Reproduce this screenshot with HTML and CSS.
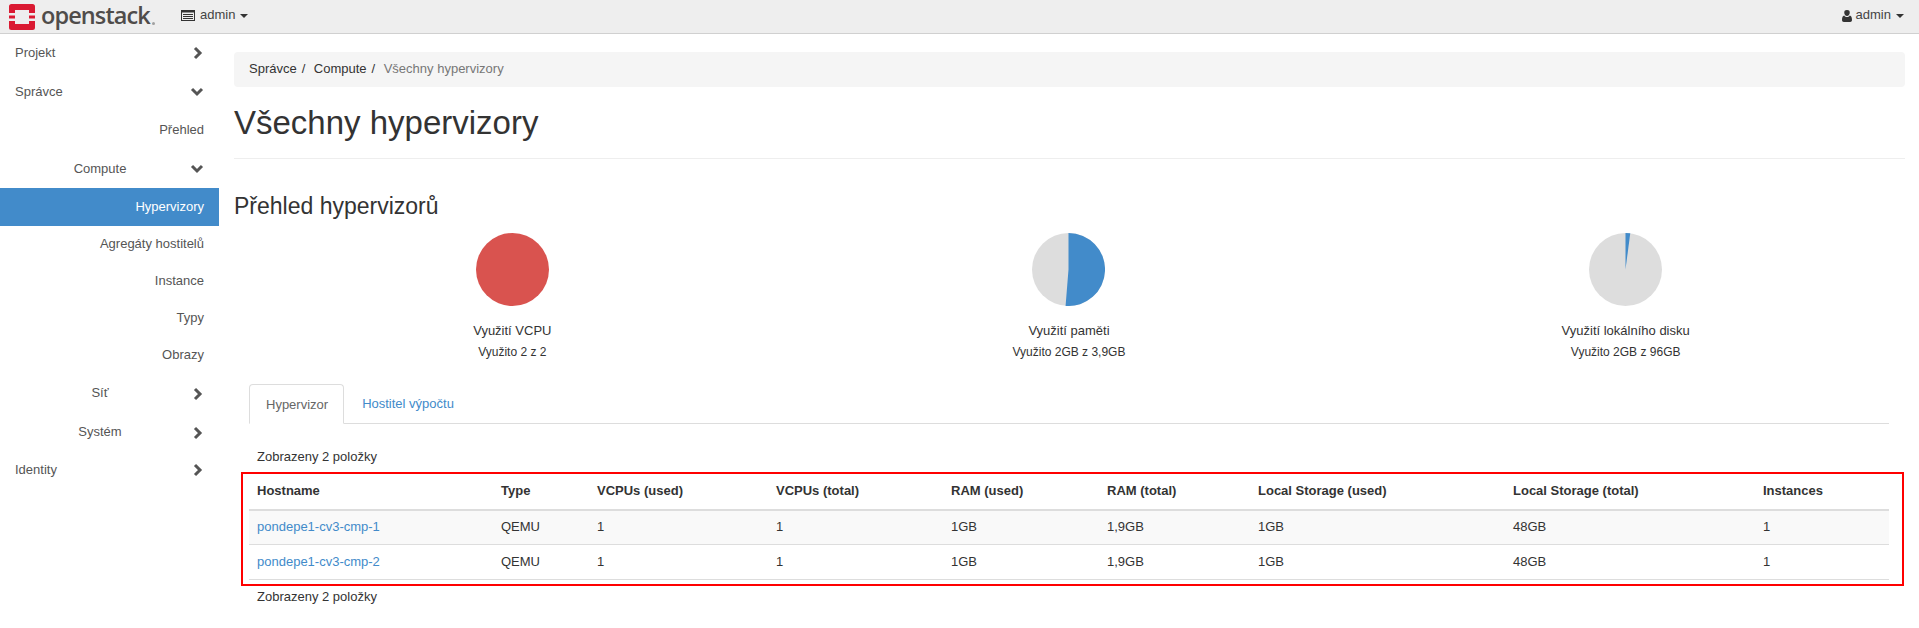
FILE: index.html
```html
<!DOCTYPE html>
<html lang="cs">
<head>
    <meta charset="UTF-8">
    <title>Všechny hypervizory</title>
    <link rel="stylesheet" href="styles.css">
</head>
<body>
    <!-- Top bar -->
    <header class="topbar">
        <div class="brand">
            <svg class="brand-mark" viewBox="0 0 26 26" width="26" height="26">
                <path fill="#da1a32" d="M2.5 0h21A2.5 2.5 0 0 1 26 2.500V9h-6V6H6v3H0V2.500A2.500 2.500 0 0 1 2.500 0zM0 11.500h6v3H0zM20 11.500h6v3h-6zM0 17h6v3h14v-3h6v6.500a2.500 2.500 0 0 1-2.500 2.500h-21A2.500 2.500 0 0 1 0 23.500z"/>
            </svg>
            <span class="brand-name">openstack</span><span class="brand-dot"></span>
        </div>
        <div class="project-menu">
            <svg class="icon-server" viewBox="0 0 14 11" width="14" height="11">
                <path fill="#333" fill-rule="evenodd" d="M0 0h14v11H0zM1 2.500v7.500h12V2.500zM2 4h10v1H2zM2 6h10v1H2zM2 8h10v1H2z"/>
            </svg>
            <span>admin</span><span class="caret"></span>
        </div>
        <div class="user-menu">
            <svg class="icon-user" viewBox="0 0 10 12" width="10" height="12">
                <path fill="#333" d="M5 0a2.700 2.700 0 0 1 2.700 3c0 1.500-1.100 3.100-2.700 3.100S2.300 4.500 2.300 3A2.700 2.700 0 0 1 5 0zM2.200 5.500C3 6.600 3.900 7 5 7s2-.4 2.800-1.500C9.200 5.700 10 7.200 10 10c0 1.200-.8 2-1.800 2H1.800C.8 12 0 11.200 0 10c0-2.800.8-4.300 2.200-4.500z"/>
            </svg>
            <span>admin</span><span class="caret"></span>
        </div>
    </header>

    <div class="layout">
        <!-- Sidebar -->
        <nav class="sidebar">
            <a class="nav-row nav-top">Projekt<svg class="chev" viewBox="0 0 12 14" width="12" height="14"><path d="M3 2l5 5-5 5" /></svg></a>
            <a class="nav-row nav-top">Správce<svg class="chev" viewBox="0 0 14 12" width="14" height="12"><path d="M2 3l5 5 5-5" /></svg></a>
            <a class="nav-row nav-sub">Přehled</a>
            <a class="nav-row nav-group">Compute<svg class="chev" viewBox="0 0 14 12" width="14" height="12"><path d="M2 3l5 5 5-5" /></svg></a>
            <a class="nav-leaf active">Hypervizory</a>
            <a class="nav-leaf">Agregáty hostitelů</a>
            <a class="nav-leaf">Instance</a>
            <a class="nav-leaf">Typy</a>
            <a class="nav-leaf">Obrazy</a>
            <a class="nav-row nav-group">Síť<svg class="chev" viewBox="0 0 12 14" width="12" height="14"><path d="M3 2l5 5-5 5" /></svg></a>
            <a class="nav-row nav-group">Systém<svg class="chev" viewBox="0 0 12 14" width="12" height="14"><path d="M3 2l5 5-5 5" /></svg></a>
            <a class="nav-row nav-top">Identity<svg class="chev" viewBox="0 0 12 14" width="12" height="14"><path d="M3 2l5 5-5 5" /></svg></a>
        </nav>

        <!-- Main content -->
        <main class="content">
            <ol class="breadcrumb">
                <li>Správce</li>
                <li>Compute</li>
                <li class="current">Všechny hypervizory</li>
            </ol>

            <h1 class="page-title">Všechny hypervizory</h1>

            <h3 class="section-title">Přehled hypervizorů</h3>

            <div class="charts">
                <div class="chart">
                    <svg class="pie" viewBox="0 0 73 73" width="73" height="73">
                        <circle cx="36.500" cy="36.500" r="36.500" fill="#d9534f"/>
                    </svg>
                    <div class="chart-title">Využití VCPU</div>
                    <div class="chart-note">Využito 2 z 2</div>
                </div>
                <div class="chart">
                    <svg class="pie" viewBox="0 0 73 73" width="73" height="73">
                        <circle cx="36.500" cy="36.500" r="36.500" fill="#dddddd"/>
                        <path fill="#428bca" d="M36.500 36.500V0A36.500 36.500 0 1 1 33.570 72.880z"/>
                    </svg>
                    <div class="chart-title">Využití paměti</div>
                    <div class="chart-note">Využito 2GB z 3,9GB</div>
                </div>
                <div class="chart">
                    <svg class="pie" viewBox="0 0 73 73" width="73" height="73">
                        <circle cx="36.500" cy="36.500" r="36.500" fill="#dddddd"/>
                        <path fill="#428bca" d="M36.500 36.500V0A36.500 36.500 0 0 1 41.260 .310z"/>
                    </svg>
                    <div class="chart-title">Využití lokálního disku</div>
                    <div class="chart-note">Využito 2GB z 96GB</div>
                </div>
            </div>

            <div class="tab-panel">
                <ul class="tabs">
                    <li class="tab active">Hypervizor</li>
                    <li class="tab">Hostitel výpočtu</li>
                </ul>

                <div class="count">Zobrazeny 2 položky</div>

                <div class="table-wrap">
                    <table class="data-table">
                        <colgroup>
                            <col class="c-host"><col class="c-type"><col class="c-vused"><col class="c-vtotal">
                            <col class="c-rused"><col class="c-rtotal"><col class="c-lused"><col class="c-ltotal"><col class="c-inst">
                        </colgroup>
                        <thead>
                            <tr>
                                <th>Hostname</th><th>Type</th><th>VCPUs (used)</th><th>VCPUs (total)</th>
                                <th>RAM (used)</th><th>RAM (total)</th><th>Local Storage (used)</th><th>Local Storage (total)</th><th>Instances</th>
                            </tr>
                        </thead>
                        <tbody>
                            <tr class="odd">
                                <td><a>pondepe1-cv3-cmp-1</a></td><td>QEMU</td><td>1</td><td>1</td>
                                <td>1GB</td><td>1,9GB</td><td>1GB</td><td>48GB</td><td>1</td>
                            </tr>
                            <tr>
                                <td><a>pondepe1-cv3-cmp-2</a></td><td>QEMU</td><td>1</td><td>1</td>
                                <td>1GB</td><td>1,9GB</td><td>1GB</td><td>48GB</td><td>1</td>
                            </tr>
                        </tbody>
                    </table>
                </div>

                <div class="count count-bottom">Zobrazeny 2 položky</div>
            </div>
        </main>
    </div>
</body>
</html>
```

FILE: styles.css
```css
* {
    box-sizing: border-box;
}

html, body {
    height: 100%;
}

body {
    margin: 0;
    height: 628px;
    overflow: hidden;
    background: #fff;
    color: #333;
    font-family: "Liberation Sans", Arial, sans-serif;
    font-size: 13px;
    line-height: 18.5px;
}

/* Top bar */
.topbar {
    display: flex;
    align-items: center;
    height: 34px;
    background: #eee;
    border-bottom: 1px solid #d0d0d0;
    padding: 0 15px 0 9px;
}

.brand {
    display: flex;
    align-items: center;
    width: 171px;
}

.brand-mark {
    margin: 0 6px 0 0;
}

.brand-name {
    font-family: "Open Sans", sans-serif;
    font-size: 23.500px;
    font-weight: 600;
    line-height: 28px;
    letter-spacing: -0.9px;
    color: #4f4c4a;
    margin-top: -3px;
}

.brand-dot {
    width: 3px;
    height: 3px;
    margin: 14px 0 0 2px;
    border-radius: 50%;
    background: #a0a0a0;
}

.project-menu, .user-menu {
    display: flex;
    align-items: center;
    color: #444;
    margin-top: -2px;
}

.project-menu svg {
    margin: 0 5px 0 1px;
}

.user-menu {
    margin-left: auto;
}

.user-menu svg {
    margin-right: 4px;
}

.caret {
    width: 0;
    height: 0;
    margin-left: 5px;
    border-top: 4px solid #333;
    border-left: 4px solid transparent;
    border-right: 4px solid transparent;
}

/* Sidebar */
.layout {
    display: flex;
}

.sidebar {
    width: 219px;
    flex: none;
}

.sidebar a {
    color: #555;
    display: flex;
    align-items: center;
}

.nav-row {
    height: 38.500px;
    padding: 0 15px;
}

.nav-top {
    justify-content: space-between;
}

.nav-sub {
    justify-content: flex-end;
}

.nav-group {
    position: relative;
    justify-content: center;
    padding: 0 19px 0 0;
}

.chev {
    fill: none;
    stroke: #555;
    stroke-width: 3;
}

.nav-group .chev {
    position: absolute;
    right: 15px;
    top: 13px;
}

.nav-leaf {
    justify-content: flex-end;
    height: 37px;
    padding: 0 15px;
}

.sidebar a.active {
    background: #428bca;
    color: #fff;
    height: 38px;
}

/* Main content */
.content {
    flex: 1;
    padding: 18px 14px 0 15px;
    min-width: 0;
}

.breadcrumb {
    display: flex;
    list-style: none;
    margin: 0;
    padding: 8px 15px;
    height: 35px;
    background: #f5f5f5;
    border-radius: 4px;
}

.breadcrumb li + li::before {
    content: "/";
    padding: 0 8.500px 0 5px;
    color: #333;
}

.breadcrumb .current {
    color: #777;
}

.page-title {
    margin: 18px 0 0;
    padding-bottom: 17px;
    border-bottom: 1px solid #eee;
    font-size: 33px;
    font-weight: 400;
    line-height: 36.300px;
    color: #333;
}

.section-title {
    margin: 35px 0 0;
    font-size: 23px;
    font-weight: 400;
    line-height: 25.300px;
}

.charts {
    display: grid;
    grid-template-columns: repeat(3, 1fr);
    margin-top: 13px;
    padding-right: 1px;
}

.chart {
    text-align: center;
}

.pie {
    display: block;
    margin: 0 auto;
}

.chart-title {
    margin-top: 16px;
}

.chart-note {
    margin-top: 4px;
    font-size: 12px;
    line-height: 17px;
}

/* Tabs */
.tab-panel {
    padding: 0 16px 0 15px;
    margin-top: 23px;
}

.tabs {
    display: flex;
    list-style: none;
    margin: 0;
    padding: 0;
    height: 40px;
    border-bottom: 1px solid #ddd;
}

.tab {
    height: 40px;
    padding: 11px 18px 0;
    color: #428bca;
}

.tab.active {
    padding: 11px 15px 0 16px;
    color: #666;
    background: #fff;
    border: 1px solid #ddd;
    border-bottom-color: #fff;
    border-radius: 4px 4px 0 0;
}

.count {
    padding: 0 8px;
    margin-top: 24px;
}

.count-bottom {
    margin-top: 8px;
}

/* Table */
.table-wrap {
    position: relative;
    margin-top: 7px;
}

/* red marker drawn over the table */
.table-wrap::after {
    content: "";
    position: absolute;
    inset: -2px -15px -6px -8px;
    border: 2px solid #f00;
    pointer-events: none;
}

.data-table {
    width: 100%;
    table-layout: fixed;
    border-collapse: collapse;
}

.c-host { width: 244px; }
.c-type { width: 96px; }
.c-vused { width: 179px; }
.c-vtotal { width: 175px; }
.c-rused { width: 156px; }
.c-rtotal { width: 151px; }
.c-lused { width: 255px; }
.c-ltotal { width: 250px; }
.c-inst { width: 134px; }

.data-table th {
    text-align: left;
    padding: 0 8px;
    height: 36px;
    border-bottom: 2px solid #ddd;
}

.data-table td {
    padding: 0 8px;
    height: 35px;
    border-bottom: 1px solid #ddd;
}

.data-table .odd td {
    background: #f9f9f9;
}

.data-table a {
    color: #428bca;
}
```
